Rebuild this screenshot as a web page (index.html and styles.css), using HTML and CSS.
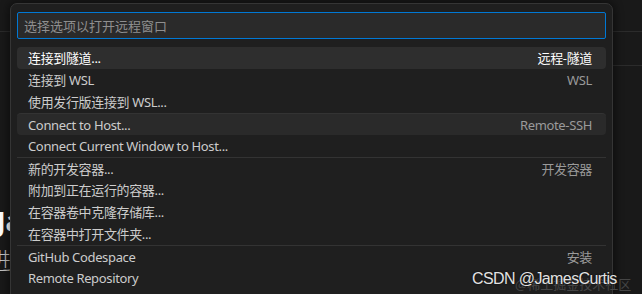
FILE: index.html
```html
<!DOCTYPE html>
<html>
    <head>
        <title>Remote</title>
        <meta name="viewport" content="width=device-width, initial-scale=1.0">
        <link rel="stylesheet" href="styles.css">
    </head>
    <body>
        <div class="editor">
            <div class="tabs"></div>
            <div class="toolbar"><div class="toolbar-line"></div></div>
            <div class="page">
                <div class="page-title">Ja</div>
                <div class="page-sub">进</div>
            </div>
        </div>

        <div class="quick-pick">
            <div class="input">选择选项以打开远程窗口</div>
            <div class="list">
                <div class="row selected"><span class="label">连接到隧道...</span><span class="desc">远程-隧道</span></div>
                <div class="row"><span class="label">连接到 WSL</span><span class="desc">WSL</span></div>
                <div class="row"><span class="label">使用发行版连接到 WSL...</span></div>
                <div class="row separator hover"><span class="label">Connect to Host...</span><span class="desc">Remote-SSH</span></div>
                <div class="row"><span class="label">Connect Current Window to Host...</span></div>
                <div class="row separator"><span class="label">新的开发容器...</span><span class="desc">开发容器</span></div>
                <div class="row"><span class="label">附加到正在运行的容器...</span></div>
                <div class="row"><span class="label">在容器卷中克隆存储库...</span></div>
                <div class="row"><span class="label">在容器中打开文件夹...</span></div>
                <div class="row separator"><span class="label">GitHub Codespace</span><span class="desc">安装</span></div>
                <div class="row"><span class="label">Remote Repository</span></div>
            </div>
        </div>

        <div class="watermark">
            <span class="mark-faint">@稀土掘金技术社区</span>
            <span class="mark-main">CSDN @JamesCurtis</span>
        </div>
    </body>
</html>
```

FILE: styles.css
```css
* {
    box-sizing: border-box;
}

body {
    margin: 0;
    width: 642px;
    height: 294px;
    overflow: hidden;
    position: relative;
    background: #191919;
    font-family: "Noto Sans", "Noto Sans CJK SC", sans-serif;
    font-size: 13px;
    color: #cccccc;
}

/* editor behind the quick pick */
.editor {
    display: flex;
    flex-direction: column;
    height: 100%;
}

.tabs {
    height: 32px;
    border-bottom: 1px solid #2b2b2b;
}

.toolbar {
    height: 34px;
    display: flex;
    align-items: flex-end;
}

.toolbar-line {
    margin-left: auto;
    width: 32px;
    border-bottom: 1px solid #2b2b2b;
}

.page {
    padding-top: 140px;
    overflow: hidden;
}

.page-title {
    margin-left: -3px;
    font-size: 26px;
    font-weight: bold;
    color: #ffffff;
    line-height: 30px;
}

.page-sub {
    margin-top: 10px;
    margin-left: -12px;
    font-size: 23px;
    color: #c4c4c4;
    font-family: "Noto Sans CJK SC", sans-serif;
    font-weight: 300;
    line-height: 26px;
}

/* quick pick overlay */
.quick-pick {
    position: absolute;
    top: 3px;
    left: 10px;
    width: 603px;
    height: 300px;
    background: #1f1f1f;
    border: 1px solid #353535;
    border-radius: 7px;
    box-shadow: 0 0 8px 2px rgba(0, 0, 0, 0.45);
    padding: 8px 6px 0 6px;
}

.input {
    height: 27px;
    border: 1px solid #0078d4;
    border-radius: 2px;
    background: #2a2a2a;
    color: #8f8f8f;
    padding-left: 6px;
    display: flex;
    align-items: center;
}

.list {
    margin-top: 8px;
    display: flex;
    flex-direction: column;
}

.row {
    height: 22px;
    display: flex;
    align-items: center;
    justify-content: space-between;
    padding: 0 14px 0 11px;
    border-radius: 4px;
    white-space: nowrap;
    letter-spacing: -0.35px;
    line-height: 20px;
}

.separator {
    border-top: 1px solid #333333;
    border-radius: 0;
}

.selected {
    background: #2e2e2e;
    color: #ffffff;
}

.hover {
    background: #2a2a2a;
    border-radius: 4px;
}

.desc {
    color: #9a9a9a;
}

.selected .desc {
    color: #ffffff;
}

/* screenshot watermark */
.watermark {
    position: absolute;
    left: 472px;
    top: 270px;
    height: 24px;
}

.mark-main {
    position: relative;
    font-family: "Liberation Sans", Arial, sans-serif;
    font-size: 16px;
    color: #e2e2e2;
    letter-spacing: -0.6px;
    text-shadow: 0 0 2px rgba(0, 0, 0, 0.8);
}

.mark-faint {
    position: absolute;
    left: 43px;
    top: 4px;
    white-space: nowrap;
    font-family: "Noto Sans CJK SC", sans-serif;
    font-size: 13px;
    color: #454545;
}
```
